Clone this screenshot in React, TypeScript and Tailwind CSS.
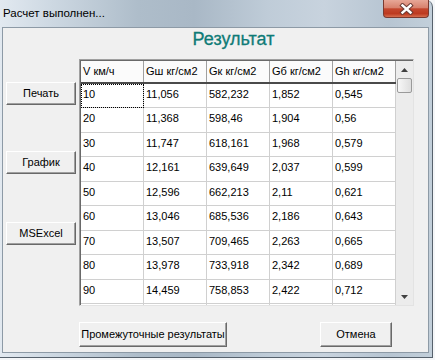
import { FunctionComponent } from "react";

const rows: string[][] = [
  ["10", "11,056", "582,232", "1,852", "0,545"],
  ["20", "11,368", "598,46", "1,904", "0,56"],
  ["30", "11,747", "618,161", "1,968", "0,579"],
  ["40", "12,161", "639,649", "2,037", "0,599"],
  ["50", "12,596", "662,213", "2,11", "0,621"],
  ["60", "13,046", "685,536", "2,186", "0,643"],
  ["70", "13,507", "709,465", "2,263", "0,665"],
  ["80", "13,978", "733,918", "2,342", "0,689"],
  ["90", "14,459", "758,853", "2,422", "0,712"],
  ["", "", "", "", ""],
];

const headers = ["V км/ч", "Gш кг/см2", "Gк кг/см2", "Gб кг/см2", "Gh кг/см2"];

const ClassicButton: FunctionComponent<{ label: string; className?: string }> = ({
  label,
  className = "",
}) => (
  <button
    className={`flex items-center justify-center bg-[#f0f0f0] border border-t-white border-l-white border-r-[#696969] border-b-[#696969] shadow-[inset_-1px_-1px_0_#a0a0a0] text-[11px] leading-[13px] text-black ${className}`}
  >
    {label}
  </button>
);

const Arrow: FunctionComponent<{ up?: boolean }> = ({ up = false }) => (
  <svg width="7" height="4" viewBox="0 0 7 4">
    <polygon points={up ? "3.5,0 7,4 0,4" : "0,0 7,0 3.5,4"} fill="#404040" />
  </svg>
);

const App: FunctionComponent = () => {
  return (
    <div className="w-[435px] h-[360px] bg-[#f4f6f8] overflow-hidden font-['Liberation_Sans',Arial,sans-serif] text-black">
      <div className="w-[433px] h-[358px] flex flex-col rounded-tr-[7px] border-r border-b border-[#56616c] bg-[linear-gradient(90deg,#e2e9f0_0%,#cdd8e2_12%,#aebdca_32%,#a9b8c6_45%,#bfccd8_62%,#c8d3de_75%,#b7c5d2_90%,#c2cfda_100%)]">
        {/* title bar */}
        <div className="h-[27px] flex justify-between">
          <span className="pl-[3px] pt-[7px] text-[11.5px] leading-[13px]">Расчет выполнен...</span>
          <div className="w-[46px] h-[18px] mr-[3px] rounded-b-[4px] border border-t-0 border-[#7a3a30] bg-[linear-gradient(180deg,#e7a797_0%,#d8826e_45%,#c4472e_52%,#bd3a20_80%,#d66e4f_100%)] flex items-center justify-center">
            <svg width="15" height="12" viewBox="0 0 15 12">
              <path d="M3.5 2.5 L11.5 9.5 M11.5 2.5 L3.5 9.5" stroke="#6b3b34" strokeWidth="4.4" strokeLinecap="square" />
              <path d="M3.5 2.5 L11.5 9.5 M11.5 2.5 L3.5 9.5" stroke="#ffffff" strokeWidth="2.4" strokeLinecap="square" />
            </svg>
          </div>
        </div>

        {/* client area */}
        <div className="ml-[2px] w-[427px] h-[326px] border border-[#8d9aa6] bg-[#f0f0f0] flex flex-col">
          <div className="h-[31px] pt-[1px] pl-[36px] text-center text-[18px] leading-[20px] text-[#0f7b77] [-webkit-text-stroke:0.3px_#0f7b77]">
            Результат
          </div>

          <div className="flex h-[247px]">
            <div className="w-[76px] pl-[3px] flex flex-col">
              <ClassicButton label="Печать" className="w-[70px] h-[23px] mt-[23px]" />
              <ClassicButton label="График" className="w-[70px] h-[23px] mt-[46px]" />
              <ClassicButton label="MSExcel" className="w-[70px] h-[23px] mt-[48px]" />
            </div>

            {/* string grid */}
            <div className="w-[335px] h-[247px] flex border border-t-[#a0a0a0] border-l-[#a0a0a0] border-r-[#e3e3e3] border-b-[#e3e3e3]">
              <div className="flex-1 flex border-t border-l border-[#696969] bg-white overflow-hidden">
                <div className="w-[315px] flex flex-col text-[11px] leading-[13px]">
                  <div className="h-[22.5px] shrink-0 flex border-b-2 border-[#4a4a4a]">
                    {headers.map((h) => (
                      <div key={h} className="w-[63px] flex items-center pl-[2px] border-r border-[#a0a0a0] bg-[#fbfbfb]">
                        {h}
                      </div>
                    ))}
                  </div>
                  {rows.map((r, i) => (
                    <div key={i} className="h-[24.5px] shrink-0 flex">
                      {r.map((c, j) => (
                        <div
                          key={j}
                          className={`w-[63px] pt-[4px] pl-[2px] border-r border-b border-[#d0d0d0] ${
                            i === 0 && j === 0 ? "outline outline-1 outline-dotted outline-black -outline-offset-1" : ""
                          }`}
                        >
                          {c}
                        </div>
                      ))}
                    </div>
                  ))}
                </div>

                {/* scrollbar */}
                <div className="w-[17px] flex flex-col bg-[#ececec]">
                  <div className="h-[17px] flex items-center justify-center">
                    <Arrow up />
                  </div>
                  <div className="mx-[1px] h-[15px] rounded-[2px] border border-[#9a9a9a] bg-[linear-gradient(90deg,#f7f7f7,#dedede)]" />
                  <div className="flex-1" />
                  <div className="h-[17px] flex items-center justify-center">
                    <Arrow />
                  </div>
                </div>
              </div>
            </div>
          </div>

          <div className="flex mt-[16px] pl-[76px]">
            <ClassicButton label="Промежуточные результаты" className="w-[148px] h-[25px]" />
            <ClassicButton label="Отмена" className="w-[72px] h-[25px] ml-[93px]" />
          </div>
        </div>
      </div>
    </div>
  );
};

export default App;
